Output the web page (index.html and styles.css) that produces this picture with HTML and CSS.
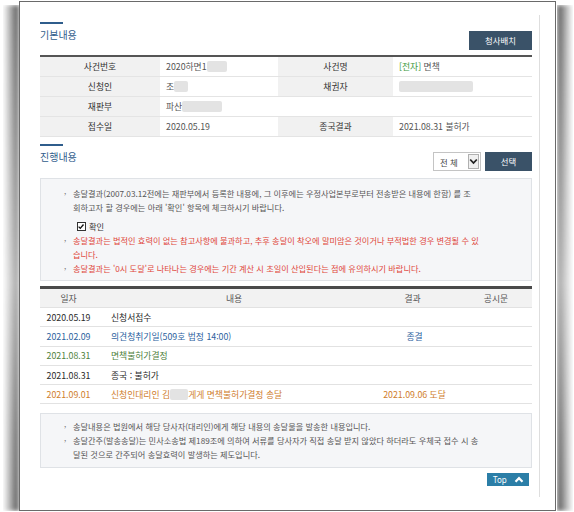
FILE: index.html
```html
<!DOCTYPE html>
<html lang="ko">
<head>
<meta charset="utf-8">
<title>사건 진행내용</title>
<link rel="stylesheet" href="styles.css">
</head>
<body>
<div class="frame">
  <div class="inner">
    <div class="sec-head">
      <h2 class="title">기본내용</h2>
      <button class="btn btn-map" type="button">청사배치</button>
    </div>
    <table class="basic">
      <colgroup><col class="c1"><col class="c2"><col class="c3"><col class="c4"></colgroup>
      <tr><th>사건번호</th><td>2020하면1<span class="redact w20"></span></td><th>사건명</th><td><span class="green">[전자]</span> 면책</td></tr>
      <tr><th>신청인</th><td>조<span class="redact w14"></span></td><th>채권자</th><td><span class="redact w74"></span></td></tr>
      <tr><th>재판부</th><td colspan="3">파산<span class="redact w40"></span></td></tr>
      <tr><th>접수일</th><td>2020.05.19</td><th>종국결과</th><td>2021.08.31 불허가</td></tr>
    </table>

    <div class="sec-head head2">
      <h2 class="title">진행내용</h2>
      <div class="filter">
        <div class="select"><span class="sel-text">전 체</span><span class="sel-arrow"><svg width="9" height="7" viewBox="0 0 9 7"><polyline points="1.2,1.5 4.5,5 7.8,1.5" fill="none" stroke="#222" stroke-width="1.8"/></svg></span></div>
        <button class="btn btn-sel" type="button">선택</button>
      </div>
    </div>
    <div class="notice">
      <div class="li bullet">송달결과(2007.03.12전에는 재판부에서 등록한 내용에, 그 이후에는 우정사업본부로부터 전송받은 내용에 한함) 를 조</div>
      <div class="li">회하고자 할 경우에는 아래 '확인' 항목에 체크하시기 바랍니다.</div>
      <div class="chk"><span class="box"><svg width="9" height="9" viewBox="0 0 9 9"><polyline points="1.8,4.6 3.7,6.6 7.3,2.2" fill="none" stroke="#111" stroke-width="1.5"/></svg></span><span>확인</span></div>
      <div class="li bullet red">송달결과는 법적인 효력이 없는 참고사항에 불과하고, 추후 송달이 착오에 말미암은 것이거나 부적법한 경우 변경될 수 있</div>
      <div class="li red">습니다.</div>
      <div class="li bullet red">송달결과는 '0시 도달'로 나타나는 경우에는 기간 계산 시 초일이 산입된다는 점에 유의하시기 바랍니다.</div>
    </div>

    <table class="prog">
      <colgroup><col class="p1"><col class="p2"><col class="p3"><col class="p4"></colgroup>
      <thead>
        <tr><th>일자</th><th class="th-content">내용</th><th>결과</th><th>공시문</th></tr>
      </thead>
      <tbody>
        <tr class="k-black"><td class="d">2020.05.19</td><td class="c">신청서접수</td><td class="r"></td><td></td></tr>
        <tr class="k-blue"><td class="d">2021.02.09</td><td class="c">의견청취기일(509호 법정 14:00)</td><td class="r">종결</td><td></td></tr>
        <tr class="k-green"><td class="d">2021.08.31</td><td class="c">면책불허가결정</td><td class="r"></td><td></td></tr>
        <tr class="k-black"><td class="d">2021.08.31</td><td class="c">종국 : 불허가</td><td class="r"></td><td></td></tr>
        <tr class="k-orange"><td class="d">2021.09.01</td><td class="c">신청인대리인 김<span class="redact w18"></span>게게 면책불허가결정 송달</td><td class="r">2021.09.06 도달</td><td></td></tr>
      </tbody>
    </table>

    <div class="notice notice2">
      <div class="li bullet">송달내용은 법원에서 해당 당사자(대리인)에게 해당 내용의 송달물을 발송한 내용입니다.</div>
      <div class="li bullet">송달간주(발송송달)는 민사소송법 제189조에 의하여 서류를 당사자가 직접 송달 받지 않았다 하더라도 우체국 접수 시 송</div>
      <div class="li">달된 것으로 간주되어 송달효력이 발생하는 제도입니다.</div>
    </div>

    <div class="top-row">
      <a class="top-btn" href="#">Top <svg width="10" height="7" viewBox="0 0 10 7"><polyline points="1.5,5.8 5,2.2 8.5,5.8" fill="none" stroke="#fff" stroke-width="2.2"/></svg></a>
    </div>
  </div>
</div>
</body>
</html>
```

FILE: styles.css
```css
html {
  margin: 0;
  padding: 0;
  background: #fff;
  overflow: hidden;
}
body {
  margin: 0;
  padding: 0;
  background: transparent;
  font-family: "Noto Sans CJK KR", "Noto Sans", sans-serif;
  color: #555;
}
.frame {
  position: relative;
  margin: 1px 0 0 19px;
  width: 537px;
  height: 510px;
  box-sizing: border-box;
  border: 1px solid #6a6a6a;
  background: #fff;
}
.frame::before,
.frame::after {
  content: "";
  position: absolute;
  z-index: -1;
  top: 3px;
  bottom: -1px;
  width: 16px;
  filter: blur(2px);
  -webkit-mask-image: linear-gradient(to bottom, #000 0%, rgba(0,0,0,.8) 25%, rgba(0,0,0,.55) 55%, rgba(0,0,0,.9) 85%, #000 100%);
  mask-image: linear-gradient(to bottom, #000 0%, rgba(0,0,0,.8) 25%, rgba(0,0,0,.55) 55%, rgba(0,0,0,.9) 85%, #000 100%);
}
.frame::before {
  left: -17px;
  background: linear-gradient(to right, rgba(90,90,90,0), rgba(60,60,60,.9));
}
.frame::after {
  right: -18px;
  background: linear-gradient(to left, rgba(90,90,90,0), rgba(60,60,60,.9));
}
.inner {
  margin-top: 13px;
  width: 520px;
  height: 482px;
  box-sizing: border-box;
  padding: 7px 7px 10px 20px;
  border-right: 1px solid #dedede;
  display: flex;
  flex-direction: column;
}
.sec-head {
  display: flex;
  justify-content: space-between;
  align-items: flex-start;
  margin-bottom: 5px;
}
.head2 {
  margin-top: 7px;
  margin-bottom: 7px;
}
.title {
  margin: 0;
  font-size: 10px;
  font-weight: normal;
  line-height: 14px;
  color: #2f5d8c;
}
.title::before {
  content: "";
  display: block;
  width: 23px;
  height: 2px;
  background: #2f5d8c;
  margin-bottom: 4px;
}
.btn {
  border: 0;
  margin: 0;
  padding: 0;
  height: 19px;
  background: #3a5268;
  color: #fff;
  font-family: inherit;
  font-size: 8.4px;
  line-height: 19px;
  text-align: center;
}
.btn-map {
  width: 63px;
  margin-top: 9px;
}
.filter {
  display: flex;
  gap: 4px;
  margin-top: 8px;
}
.btn-sel {
  width: 47px;
}
.select {
  width: 48px;
  height: 19px;
  box-sizing: border-box;
  border: 1px solid #c4c4c4;
  background: #fff;
  display: flex;
  align-items: center;
  justify-content: space-between;
  padding-right: 1px;
}
.sel-text {
  font-size: 8.4px;
  color: #444;
  padding-left: 6px;
}
.sel-arrow {
  width: 11px;
  height: 15px;
  box-sizing: border-box;
  border: 1px solid #b0b0b0;
  background: #f0f0f0;
  display: flex;
  align-items: center;
  justify-content: center;
}

/* basic info table */
table {
  border-collapse: collapse;
  table-layout: fixed;
  width: 100%;
}
.basic {
  border-top: 2px solid #555;
  font-size: 8.8px;
}
.basic .c1 { width: 120px; }
.basic .c2 { width: 118px; }
.basic .c3 { width: 115px; }
.basic .c4 { width: 139px; }
.basic th,
.basic td {
  height: 19px;
  padding: 0;
  border-bottom: 1px solid #e4e4e4;
  white-space: nowrap;
}
.basic th {
  background: #f1f1f1;
  color: #333;
  font-weight: normal;
  text-align: center;
}
.basic td {
  padding-left: 6px;
  color: #555;
}
.green { color: #3e9a3e; }
.redact {
  display: inline-block;
  height: 11px;
  vertical-align: -2px;
  background: #e3e3e3;
  border-radius: 2px;
}
.w14 { width: 14px; }
.w18 { width: 18px; }
.w20 { width: 20px; }
.w40 { width: 40px; }
.w74 { width: 74px; }

/* notices */
.notice {
  background: #f5f6f8;
  border: 1px solid #dfe2e6;
  padding: 7px 0 5px 32px;
  font-size: 8.2px;
  line-height: 14px;
  color: #555;
}
.li {
  position: relative;
  white-space: nowrap;
}
.li.bullet::before {
  content: ",";
  position: absolute;
  left: -9px;
  top: -2px;
  color: #777;
  font-size: 8px;
}
.red { color: #e0463b; }
.chk {
  display: flex;
  align-items: center;
  gap: 3px;
  margin-top: 5px;
  padding-left: 4px;
  color: #333;
}
.chk .box {
  width: 9px;
  height: 9px;
  box-sizing: border-box;
  border: 1px solid #333;
  background: #fff;
  display: flex;
}
.chk .box svg {
  margin: -1px 0 0 -1px;
}
.notice2 {
  margin-top: 9px;
  padding: 5px 0 6px 32px;
}

/* progress table */
.prog {
  margin-top: 5px;
  border-top: 3px solid #4a4a4a;
  font-size: 8.8px;
}
.prog .p1 { width: 57px; }
.prog .p2 { width: 268px; }
.prog .p3 { width: 95px; }
.prog .p4 { width: 72px; }
.prog th {
  background: #f2f2f2;
  color: #555;
  font-weight: normal;
  height: 18px;
  padding: 0;
  text-align: center;
  border-bottom: 1px solid #e2e2e2;
}
.prog .th-content {
  padding-left: 6px;
}
.prog td {
  height: 18.3px;
  padding: 0;
  border-bottom: 1px solid #e2e2e2;
  white-space: nowrap;
}
.prog td.d { text-align: center; }
.prog td.c { padding-left: 14px; }
.prog td.r { text-align: center; padding-left: 4px; }
.k-black td { color: #2a2a2a; }
.k-blue td { color: #2d5f9e; }
.k-green td { color: #4f7f3d; }
.k-orange td { color: #cf7d2c; }

.top-row {
  display: flex;
  justify-content: flex-end;
  margin-top: 5px;
  padding-right: 3px;
}
.top-btn {
  display: flex;
  align-items: center;
  justify-content: space-between;
  width: 42px;
  height: 13px;
  box-sizing: border-box;
  padding: 0 5px 0 6px;
  background: #2b7ea7;
  color: #fff;
  font-family: "Noto Sans", sans-serif;
  font-size: 8px;
  text-decoration: none;
}
```
